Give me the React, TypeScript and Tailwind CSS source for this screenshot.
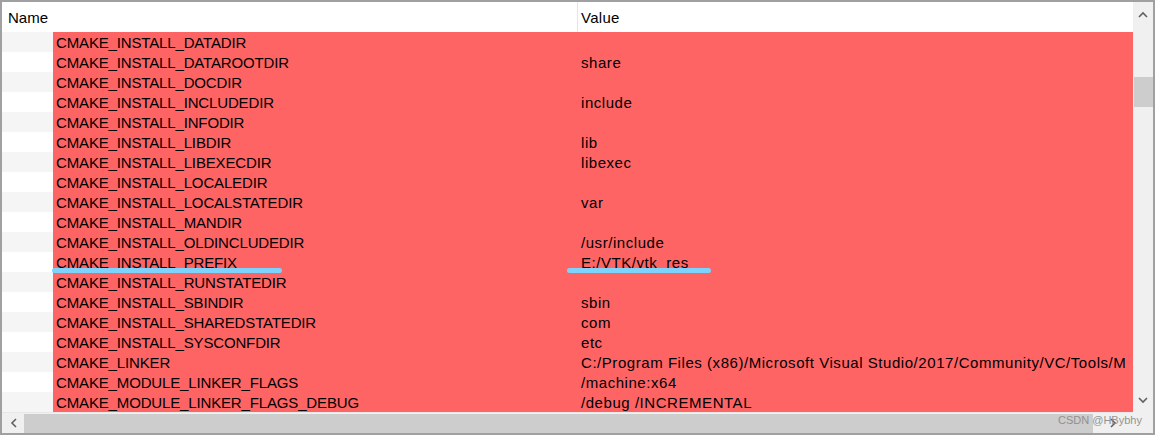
import React from "react";

const rows: [string, string][] = [
  ["CMAKE_INSTALL_DATADIR", ""],
  ["CMAKE_INSTALL_DATAROOTDIR", "share"],
  ["CMAKE_INSTALL_DOCDIR", ""],
  ["CMAKE_INSTALL_INCLUDEDIR", "include"],
  ["CMAKE_INSTALL_INFODIR", ""],
  ["CMAKE_INSTALL_LIBDIR", "lib"],
  ["CMAKE_INSTALL_LIBEXECDIR", "libexec"],
  ["CMAKE_INSTALL_LOCALEDIR", ""],
  ["CMAKE_INSTALL_LOCALSTATEDIR", "var"],
  ["CMAKE_INSTALL_MANDIR", ""],
  ["CMAKE_INSTALL_OLDINCLUDEDIR", "/usr/include"],
  ["CMAKE_INSTALL_PREFIX", "E:/VTK/vtk_res"],
  ["CMAKE_INSTALL_RUNSTATEDIR", ""],
  ["CMAKE_INSTALL_SBINDIR", "sbin"],
  ["CMAKE_INSTALL_SHAREDSTATEDIR", "com"],
  ["CMAKE_INSTALL_SYSCONFDIR", "etc"],
  ["CMAKE_LINKER", "C:/Program Files (x86)/Microsoft Visual Studio/2017/Community/VC/Tools/M"],
  ["CMAKE_MODULE_LINKER_FLAGS", "/machine:x64"],
  ["CMAKE_MODULE_LINKER_FLAGS_DEBUG", "/debug /INCREMENTAL"],
];

const Chevron = ({ dir }: { dir: "up" | "down" | "left" | "right" }) => {
  const pts: Record<string, string> = {
    up: "1,7 5,3 9,7",
    down: "1,3 5,7 9,3",
    left: "7,1 3,5 7,9",
    right: "3,1 7,5 3,9",
  };
  return (
    <svg width="10" height="10" viewBox="0 0 10 10">
      <polyline points={pts[dir]} fill="none" stroke="#606060" strokeWidth="1.6" />
    </svg>
  );
};

export default function App() {
  return (
    <div
      className="relative w-[1155px] h-[435px] border-2 border-[#a0a0a0] bg-white flex flex-col overflow-hidden text-black"
      style={{ fontFamily: '"Liberation Sans", Arial, sans-serif' }}
    >
      <div className="flex h-[410px]">
        <div className="w-[1131px] flex flex-col overflow-hidden">
          <div className="h-[30px] flex items-center text-[15px] bg-white">
            <div className="w-[575px] pl-[6px] pt-[2px]">Name</div>
            <div className="h-full w-px bg-[#e5e5e5]" />
            <div className="pl-[3px] pt-[2px] tracking-[0.3px]">Value</div>
          </div>
          {rows.map(([n, v], i) => (
            <div key={n} className="flex h-[20px] text-[15px] leading-[20px]">
              <div className={`w-[51px] shrink-0 ${i % 2 === 0 ? "bg-[#f5f5f5]" : "bg-white"}`} />
              <div className="flex-1 flex bg-[#ff6464] overflow-hidden pt-[1px]">
                <div className="w-[524px] shrink-0 pl-[3px] whitespace-nowrap tracking-[-0.15px]">{n}</div>
                <div className="pl-[4px] whitespace-nowrap tracking-[0.55px]">{v}</div>
              </div>
            </div>
          ))}
        </div>
        <div className="w-[20px] bg-[#f0f0f0] flex flex-col items-center">
          <div className="h-[24px] flex items-center justify-center pt-[2px]">
            <Chevron dir="up" />
          </div>
          <div className="mt-[51px] w-[19px] h-[30px] bg-[#cdcdcd]" />
          <div className="flex-1" />
          <div className="h-[24px] flex items-center justify-center">
            <Chevron dir="down" />
          </div>
        </div>
      </div>
      <div className="flex h-[21px]">
        <div className="w-[1131px] bg-[#f0f0f0] flex items-center border-t border-[#e8e8e8]">
          <div className="w-[22px] flex items-center justify-center pl-[2px]">
            <Chevron dir="left" />
          </div>
          <div className="w-[1069px] h-[19px] bg-[#cdcdcd]" />
          <div className="flex-1 flex items-center justify-center">
            <Chevron dir="right" />
          </div>
        </div>
        <div className="w-[20px] bg-[#f0f0f0]" />
      </div>

      <div className="absolute left-[50px] top-[266px] w-[230px] h-[5px] rounded-full bg-[#7dd3fc]" />
      <div className="absolute left-[565px] top-[266px] w-[144px] h-[5px] rounded-full bg-[#7dd3fc]" />

      <div className="absolute left-[1056px] top-[410px] text-[11px] text-[#8a8a8a] opacity-90 whitespace-nowrap">
        CSDN @HBybhy
      </div>
    </div>
  );
}
